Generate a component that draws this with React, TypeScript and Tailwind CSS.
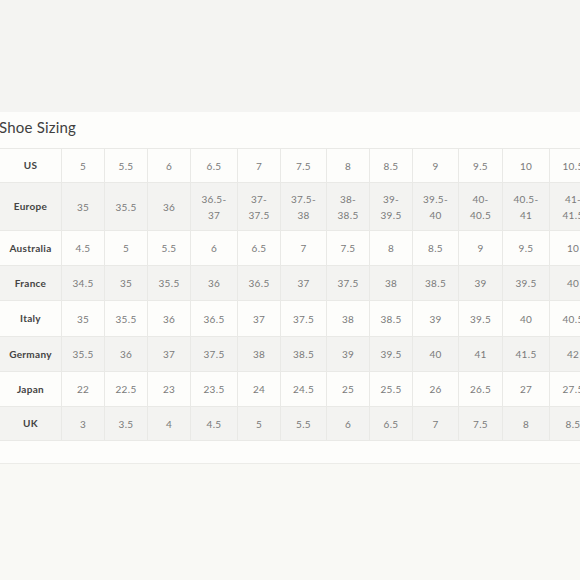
import React from 'react';

const widths = [62, 43, 43, 43, 47, 43, 46, 43, 43, 46, 44, 47, 47];

const rows: { label: string; h: number; values: string[] }[] = [
  { label: 'US', h: 34, values: ['5', '5.5', '6', '6.5', '7', '7.5', '8', '8.5', '9', '9.5', '10', '10.5'] },
  { label: 'Europe', h: 48, values: ['35', '35.5', '36', '36.5-\n37', '37-\n37.5', '37.5-\n38', '38-\n38.5', '39-\n39.5', '39.5-\n40', '40-\n40.5', '40.5-\n41', '41-\n41.5'] },
  { label: 'Australia', h: 35, values: ['4.5', '5', '5.5', '6', '6.5', '7', '7.5', '8', '8.5', '9', '9.5', '10'] },
  { label: 'France', h: 35, values: ['34.5', '35', '35.5', '36', '36.5', '37', '37.5', '38', '38.5', '39', '39.5', '40'] },
  { label: 'Italy', h: 36, values: ['35', '35.5', '36', '36.5', '37', '37.5', '38', '38.5', '39', '39.5', '40', '40.5'] },
  { label: 'Germany', h: 35, values: ['35.5', '36', '37', '37.5', '38', '38.5', '39', '39.5', '40', '41', '41.5', '42'] },
  { label: 'Japan', h: 35, values: ['22', '22.5', '23', '23.5', '24', '24.5', '25', '25.5', '26', '26.5', '27', '27.5'] },
  { label: 'UK', h: 34, values: ['3', '3.5', '4', '4.5', '5', '5.5', '6', '6.5', '7', '7.5', '8', '8.5'] },
];

const App: React.FC = () => {
  return (
    <div className="w-[580px] h-[580px] overflow-hidden bg-[#f4f4f2] font-['Lato','Noto_Sans',sans-serif]">
      <div className="h-[112px]" />
      <div className="bg-[#fdfdfb] h-[352px] border-b border-[#ecece8]">
        <h1 className="text-[15px] leading-none text-[#3f3f3f] pl-0 pt-[8px] h-[36px] -ml-[1px] tracking-[0.2px]">
          Shoe Sizing
        </h1>
        <div className="border-t border-[#e9e9e6] w-max">
          {rows.map((row, i) => (
            <div
              key={row.label}
              className={`flex border-b border-[#e9e9e6] ${i % 2 === 1 ? 'bg-[#f3f3f1]' : 'bg-[#fdfdfb]'}`}
              style={{ height: row.h }}
            >
              <div
                className="flex items-center justify-center border-r border-[#e9e9e6] text-[10px] font-bold text-[#444] tracking-[0.3px]"
                style={{ width: widths[0] }}
              >
                {row.label}
              </div>
              {row.values.map((v, j) => (
                <div
                  key={j}
                  className="flex items-center justify-center border-r border-[#e9e9e6] text-[10px] leading-[16px] text-[#7a7a7a] text-center whitespace-pre tracking-[0.3px]"
                  style={{ width: widths[j + 1] }}
                >
                  {v}
                </div>
              ))}
            </div>
          ))}
        </div>
      </div>
      <div className="bg-[#f9f9f5] flex-1 h-full" />
    </div>
  );
};

export default App;
